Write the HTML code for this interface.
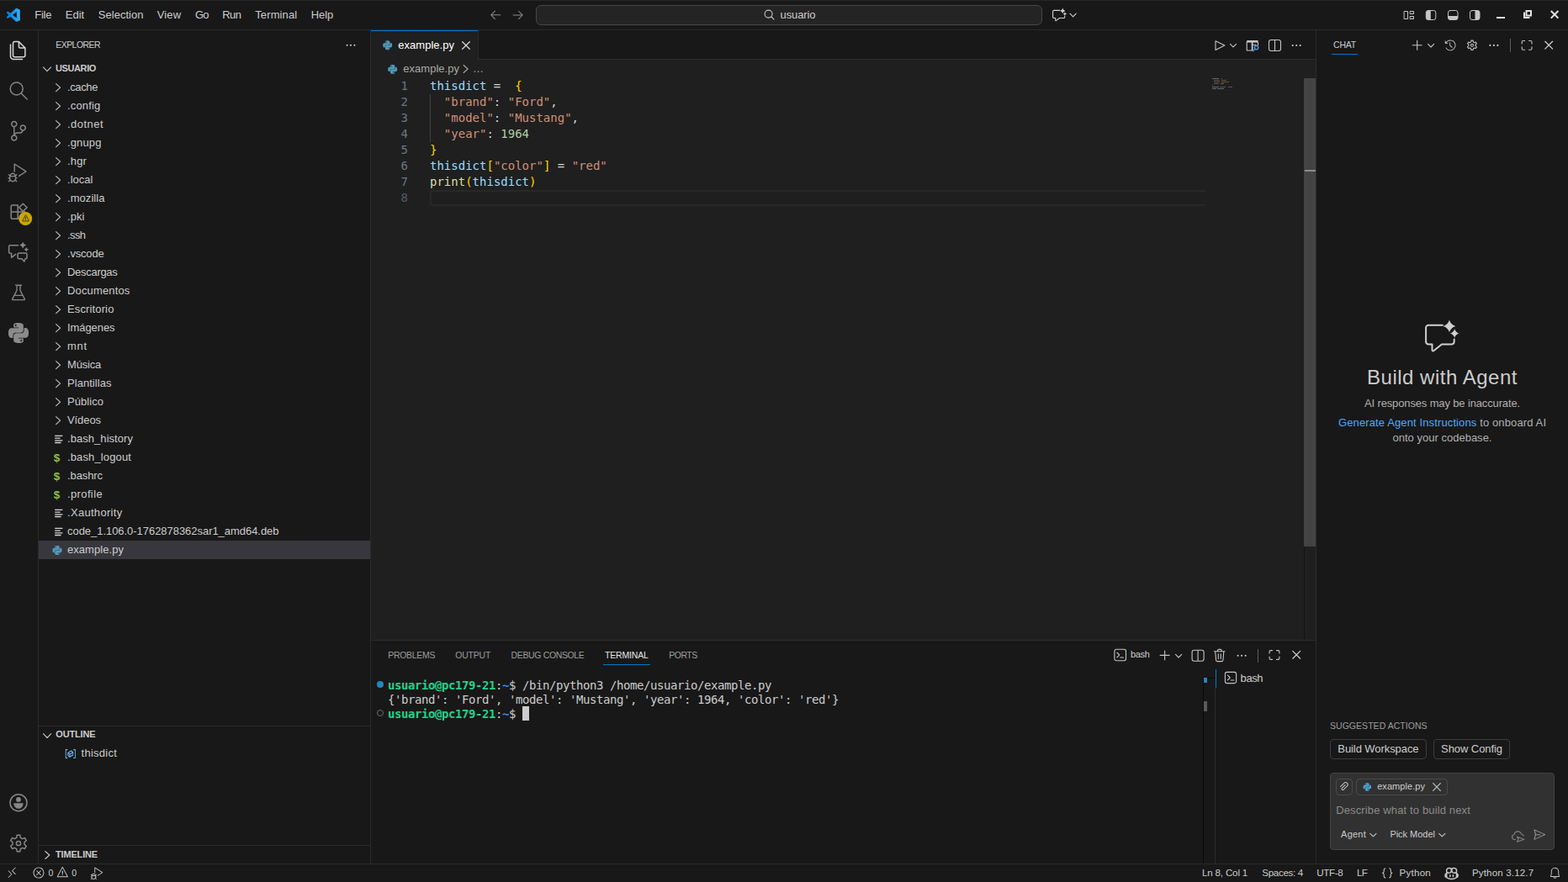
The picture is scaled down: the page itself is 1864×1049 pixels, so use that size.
<!DOCTYPE html>
<html lang="en"><head><meta charset="utf-8"><title>example.py - usuario - Visual Studio Code</title>
<style>
*{box-sizing:border-box;margin:0;padding:0}
html,body{width:1864px;height:1049px;overflow:hidden;background:#181818}
body{position:relative;font-family:"Liberation Sans",sans-serif;font-size:13px;color:#ccc}
body>div,body>svg{position:absolute}
.u{white-space:pre;font-family:"Liberation Sans",sans-serif}
.m{white-space:pre;font-family:"DejaVu Sans Mono","Liberation Mono",monospace}
</style></head>
<body>
<div style="left:0px;top:0px;width:1864px;height:35px;background:#181818;"></div>
<div style="left:0px;top:0px;width:1864px;height:1px;background:#262626;"></div>
<div style="left:0px;top:35px;width:1864px;height:1px;background:#2b2b2b;"></div>
<div style="left:0px;top:36px;width:45px;height:991px;background:#181818;"></div>
<div style="left:45px;top:36px;width:1px;height:991px;background:#2b2b2b;"></div>
<div style="left:46px;top:36px;width:394px;height:991px;background:#181818;"></div>
<div style="left:440px;top:36px;width:1px;height:991px;background:#2b2b2b;"></div>
<div style="left:441px;top:36px;width:1123px;height:35px;background:#181818;"></div>
<div style="left:441px;top:70px;width:1123px;height:1px;background:#2b2b2b;"></div>
<div style="left:441px;top:71px;width:1123px;height:690px;background:#1f1f1f;"></div>
<div style="left:441px;top:761px;width:1123px;height:266px;background:#181818;"></div>
<div style="left:441px;top:761px;width:1123px;height:1px;background:#2b2b2b;"></div>
<div style="left:1564px;top:36px;width:1px;height:991px;background:#2b2b2b;"></div>
<div style="left:1565px;top:36px;width:299px;height:991px;background:#181818;"></div>
<div style="left:0px;top:1027px;width:1864px;height:22px;background:#181818;"></div>
<div style="left:0px;top:1027px;width:1864px;height:1px;background:#2b2b2b;"></div>
<div class="u" style="top:6.5px;height:22px;line-height:22px;font-size:13px;color:#cccccc;left:41.25px;letter-spacing:-0.238px;">File</div>
<div class="u" style="top:6.5px;height:22px;line-height:22px;font-size:13px;color:#cccccc;left:77.75px;letter-spacing:0.023px;">Edit</div>
<div class="u" style="top:6.5px;height:22px;line-height:22px;font-size:13px;color:#cccccc;left:116.75px;letter-spacing:0.030px;">Selection</div>
<div class="u" style="top:6.5px;height:22px;line-height:22px;font-size:13px;color:#cccccc;left:186.75px;letter-spacing:0.137px;">View</div>
<div class="u" style="top:6.5px;height:22px;line-height:22px;font-size:13px;color:#cccccc;left:232px;letter-spacing:-0.922px;">Go</div>
<div class="u" style="top:6.5px;height:22px;line-height:22px;font-size:13px;color:#cccccc;left:264.25px;letter-spacing:-0.536px;">Run</div>
<div class="u" style="top:6.5px;height:22px;line-height:22px;font-size:13px;color:#cccccc;left:303.25px;letter-spacing:0.109px;">Terminal</div>
<div class="u" style="top:6.5px;height:22px;line-height:22px;font-size:13px;color:#cccccc;left:369.75px;letter-spacing:-0.062px;">Help</div>
<div style="left:637px;top:6px;width:602px;height:24px;background:#242424;border:1px solid #464646;border-radius:6px;"></div>
<div class="u" style="top:6.5px;height:22px;line-height:22px;font-size:13px;color:#cccccc;left:927.5px;letter-spacing:-0.092px;">usuario</div>
<div class="u" style="top:44.05px;height:19.5px;line-height:19.5px;font-size:10.5px;color:#cccccc;left:66.25px;letter-spacing:-0.555px;">EXPLORER</div>
<div class="u" style="top:71px;height:20px;line-height:20px;font-size:11px;color:#cccccc;left:66px;font-weight:700;letter-spacing:-0.391px;">USUARIO</div>
<div style="left:46px;top:643px;width:394px;height:22px;background:#37373d;"></div>
<div class="u" style="top:92.5px;height:22px;line-height:22px;font-size:13px;color:#cccccc;left:80px;letter-spacing:-0.385px;">.cache</div>
<div class="u" style="top:114.5px;height:22px;line-height:22px;font-size:13px;color:#cccccc;left:80px;letter-spacing:0.170px;">.config</div>
<div class="u" style="top:136.5px;height:22px;line-height:22px;font-size:13px;color:#cccccc;left:80px;letter-spacing:0.462px;">.dotnet</div>
<div class="u" style="top:158.5px;height:22px;line-height:22px;font-size:13px;color:#cccccc;left:80px;letter-spacing:0.122px;">.gnupg</div>
<div class="u" style="top:180.5px;height:22px;line-height:22px;font-size:13px;color:#cccccc;left:80px;letter-spacing:0.148px;">.hgr</div>
<div class="u" style="top:202.5px;height:22px;line-height:22px;font-size:13px;color:#cccccc;left:80px;letter-spacing:0.023px;">.local</div>
<div class="u" style="top:224.5px;height:22px;line-height:22px;font-size:13px;color:#cccccc;left:80px;letter-spacing:0.053px;">.mozilla</div>
<div class="u" style="top:246.5px;height:22px;line-height:22px;font-size:13px;color:#cccccc;left:80px;letter-spacing:0.066px;">.pki</div>
<div class="u" style="top:268.5px;height:22px;line-height:22px;font-size:13px;color:#cccccc;left:80px;letter-spacing:-0.586px;">.ssh</div>
<div class="u" style="top:290.5px;height:22px;line-height:22px;font-size:13px;color:#cccccc;left:80px;letter-spacing:-0.188px;">.vscode</div>
<div class="u" style="top:312.5px;height:22px;line-height:22px;font-size:13px;color:#cccccc;left:80px;letter-spacing:-0.293px;">Descargas</div>
<div class="u" style="top:334.5px;height:22px;line-height:22px;font-size:13px;color:#cccccc;left:80px;letter-spacing:0.152px;">Documentos</div>
<div class="u" style="top:356.5px;height:22px;line-height:22px;font-size:13px;color:#cccccc;left:80px;letter-spacing:0.131px;">Escritorio</div>
<div class="u" style="top:378.5px;height:22px;line-height:22px;font-size:13px;color:#cccccc;left:80px;letter-spacing:-0.074px;">Imágenes</div>
<div class="u" style="top:400.5px;height:22px;line-height:22px;font-size:13px;color:#cccccc;left:80px;letter-spacing:0.776px;">mnt</div>
<div class="u" style="top:422.5px;height:22px;line-height:22px;font-size:13px;color:#cccccc;left:80px;letter-spacing:-0.198px;">Música</div>
<div class="u" style="top:444.5px;height:22px;line-height:22px;font-size:13px;color:#cccccc;left:80px;letter-spacing:0.047px;">Plantillas</div>
<div class="u" style="top:466.5px;height:22px;line-height:22px;font-size:13px;color:#cccccc;left:80px;letter-spacing:0.051px;">Público</div>
<div class="u" style="top:488.5px;height:22px;line-height:22px;font-size:13px;color:#cccccc;left:80px;letter-spacing:-0.081px;">Vídeos</div>
<div class="u" style="top:510.5px;height:22px;line-height:22px;font-size:13px;color:#cccccc;left:80px;letter-spacing:0.052px;">.bash_history</div>
<div class="u" style="top:533.5px;height:22px;line-height:22px;font-size:13.5px;color:#8dc149;left:63.7px;font-weight:700;">$</div>
<div class="u" style="top:532.5px;height:22px;line-height:22px;font-size:13px;color:#cccccc;left:80px;letter-spacing:0.129px;">.bash_logout</div>
<div class="u" style="top:555.5px;height:22px;line-height:22px;font-size:13.5px;color:#8dc149;left:63.7px;font-weight:700;">$</div>
<div class="u" style="top:554.5px;height:22px;line-height:22px;font-size:13px;color:#cccccc;left:80px;letter-spacing:-0.092px;">.bashrc</div>
<div class="u" style="top:577.5px;height:22px;line-height:22px;font-size:13.5px;color:#8dc149;left:63.7px;font-weight:700;">$</div>
<div class="u" style="top:576.5px;height:22px;line-height:22px;font-size:13px;color:#cccccc;left:80px;letter-spacing:0.371px;">.profile</div>
<div class="u" style="top:598.5px;height:22px;line-height:22px;font-size:13px;color:#cccccc;left:80px;letter-spacing:0.304px;">.Xauthority</div>
<div class="u" style="top:620.5px;height:22px;line-height:22px;font-size:13px;color:#cccccc;left:80px;letter-spacing:-0.041px;">code_1.106.0-1762878362sar1_amd64.deb</div>
<div class="u" style="top:642.5px;height:22px;line-height:22px;font-size:13px;color:#cccccc;left:80px;letter-spacing:0.052px;">example.py</div>
<div style="left:46px;top:863px;width:394px;height:1px;background:#2b2b2b;"></div>
<div class="u" style="top:863.4px;height:20px;line-height:20px;font-size:11px;color:#cccccc;left:66.3px;font-weight:700;letter-spacing:-0.183px;">OUTLINE</div>
<div class="u" style="top:885px;height:22px;line-height:22px;font-size:13px;color:#cccccc;left:96.5px;letter-spacing:0.279px;">thisdict</div>
<div style="left:46px;top:1005px;width:394px;height:1px;background:#2b2b2b;"></div>
<div class="u" style="top:1006px;height:20px;line-height:20px;font-size:11px;color:#cccccc;left:66px;font-weight:700;letter-spacing:-0.168px;">TIMELINE</div>
<div style="left:441px;top:36px;width:127px;height:35px;background:#1f1f1f;"></div>
<div style="left:441px;top:36px;width:127px;height:1px;background:#0078d4;"></div>
<div style="left:568px;top:36px;width:1px;height:35px;background:#2b2b2b;"></div>
<div class="u" style="top:42.5px;height:22px;line-height:22px;font-size:13px;color:#ffffff;left:473.25px;letter-spacing:0.027px;">example.py</div>
<div class="u" style="top:70.5px;height:22px;line-height:22px;font-size:13px;color:#a9a9a9;left:479.25px;letter-spacing:0.027px;">example.py</div>
<div class="u" style="top:70.5px;height:22px;line-height:22px;font-size:13px;color:#a9a9a9;left:562px;letter-spacing:-1.000px;">…</div>
<div style="left:511px;top:226px;width:922px;height:19px;border:2px solid #282828;border-right:0;"></div>
<div style="left:511px;top:112px;width:1px;height:57px;background:#404040;"></div>
<div class="m" style="top:93px;height:19px;line-height:19px;font-size:14px;color:#6e7681;right:1379px;">1</div>
<div class="m" style="top:93px;height:19px;line-height:19px;font-size:14px;color:#d4d4d4;left:511px;"><span style="color:#9cdcfe">thisdict</span><span style="color:#d4d4d4"> =  </span><span style="color:#ffd700">{</span></div>
<div class="m" style="top:112px;height:19px;line-height:19px;font-size:14px;color:#6e7681;right:1379px;">2</div>
<div class="m" style="top:112px;height:19px;line-height:19px;font-size:14px;color:#d4d4d4;left:511px;"><span style="color:#ce9178">  "brand"</span><span style="color:#d4d4d4">: </span><span style="color:#ce9178">"Ford"</span><span style="color:#d4d4d4">,</span></div>
<div class="m" style="top:131px;height:19px;line-height:19px;font-size:14px;color:#6e7681;right:1379px;">3</div>
<div class="m" style="top:131px;height:19px;line-height:19px;font-size:14px;color:#d4d4d4;left:511px;"><span style="color:#ce9178">  "model"</span><span style="color:#d4d4d4">: </span><span style="color:#ce9178">"Mustang"</span><span style="color:#d4d4d4">,</span></div>
<div class="m" style="top:150px;height:19px;line-height:19px;font-size:14px;color:#6e7681;right:1379px;">4</div>
<div class="m" style="top:150px;height:19px;line-height:19px;font-size:14px;color:#d4d4d4;left:511px;"><span style="color:#ce9178">  "year"</span><span style="color:#d4d4d4">: </span><span style="color:#b5cea8">1964</span></div>
<div class="m" style="top:169px;height:19px;line-height:19px;font-size:14px;color:#6e7681;right:1379px;">5</div>
<div class="m" style="top:169px;height:19px;line-height:19px;font-size:14px;color:#d4d4d4;left:511px;"><span style="color:#ffd700">}</span></div>
<div class="m" style="top:188px;height:19px;line-height:19px;font-size:14px;color:#6e7681;right:1379px;">6</div>
<div class="m" style="top:188px;height:19px;line-height:19px;font-size:14px;color:#d4d4d4;left:511px;"><span style="color:#9cdcfe">thisdict</span><span style="color:#ffd700">[</span><span style="color:#ce9178">"color"</span><span style="color:#ffd700">]</span><span style="color:#d4d4d4"> = </span><span style="color:#ce9178">"red"</span></div>
<div class="m" style="top:207px;height:19px;line-height:19px;font-size:14px;color:#6e7681;right:1379px;">7</div>
<div class="m" style="top:207px;height:19px;line-height:19px;font-size:14px;color:#d4d4d4;left:511px;"><span style="color:#dcdcaa">print</span><span style="color:#ffd700">(</span><span style="color:#9cdcfe">thisdict</span><span style="color:#ffd700">)</span></div>
<div class="m" style="top:226px;height:19px;line-height:19px;font-size:14px;color:#555b64;right:1379px;">8</div>
<div style="left:1441px;top:93px;width:8px;height:1px;background:#9cdcfe;opacity:.42;"></div>
<div style="left:1452px;top:93px;width:1px;height:1px;background:#ffd700;opacity:.42;"></div>
<div style="left:1443px;top:95px;width:7px;height:1px;background:#ce9178;opacity:.42;"></div>
<div style="left:1452px;top:95px;width:6px;height:1px;background:#ce9178;opacity:.42;"></div>
<div style="left:1443px;top:97px;width:7px;height:1px;background:#ce9178;opacity:.42;"></div>
<div style="left:1452px;top:97px;width:9px;height:1px;background:#ce9178;opacity:.42;"></div>
<div style="left:1443px;top:99px;width:6px;height:1px;background:#ce9178;opacity:.42;"></div>
<div style="left:1451px;top:99px;width:4px;height:1px;background:#b5cea8;opacity:.42;"></div>
<div style="left:1441px;top:101px;width:1px;height:1px;background:#ffd700;opacity:.42;"></div>
<div style="left:1441px;top:103px;width:8px;height:1px;background:#9cdcfe;opacity:.42;"></div>
<div style="left:1450px;top:103px;width:7px;height:1px;background:#ce9178;opacity:.42;"></div>
<div style="left:1460px;top:103px;width:5px;height:1px;background:#ce9178;opacity:.42;"></div>
<div style="left:1441px;top:105px;width:5px;height:1px;background:#dcdcaa;opacity:.42;"></div>
<div style="left:1447px;top:105px;width:8px;height:1px;background:#9cdcfe;opacity:.42;"></div>
<div style="left:1550px;top:93px;width:14px;height:557px;background:#434343;"></div>
<div style="left:1551px;top:202px;width:13px;height:2px;background:#8c8c8c;"></div>
<div style="left:1550px;top:650px;width:1px;height:111px;background:#141414;"></div>
<div class="u" style="top:770.25px;height:19.5px;line-height:19.5px;font-size:10.5px;color:#9d9d9d;left:461.2px;letter-spacing:-0.295px;">PROBLEMS</div>
<div class="u" style="top:770.25px;height:19.5px;line-height:19.5px;font-size:10.5px;color:#9d9d9d;left:541.3px;letter-spacing:-0.212px;">OUTPUT</div>
<div class="u" style="top:770.25px;height:19.5px;line-height:19.5px;font-size:10.5px;color:#9d9d9d;left:607.6px;letter-spacing:-0.362px;">DEBUG CONSOLE</div>
<div class="u" style="top:770.25px;height:19.5px;line-height:19.5px;font-size:10.5px;color:#e7e7e7;left:718.9px;letter-spacing:-0.149px;">TERMINAL</div>
<div class="u" style="top:770.25px;height:19.5px;line-height:19.5px;font-size:10.5px;color:#9d9d9d;left:795.2px;letter-spacing:-0.477px;">PORTS</div>
<div style="left:717px;top:790px;width:56px;height:1px;background:#0078d4;"></div>
<div class="u" style="top:767.6px;height:20px;line-height:20px;font-size:11px;color:#cccccc;left:1344.1px;letter-spacing:-0.365px;">bash</div>
<div style="left:1495px;top:772px;width:1px;height:16px;background:#5a5a5a;"></div>
<div class="m" style="top:806.5px;height:17px;line-height:17px;font-size:14px;color:#cccccc;left:461px;letter-spacing:-0.43px;"><b style="color:#23d18b">usuario@pc179-21</b>:<b style="color:#3b8eea">~</b>$ /bin/python3 /home/usuario/example.py</div>
<div class="m" style="top:823.5px;height:17px;line-height:17px;font-size:14px;color:#cccccc;left:461px;letter-spacing:-0.43px;">{'brand': 'Ford', 'model': 'Mustang', 'year': 1964, 'color': 'red'}</div>
<div class="m" style="top:840.5px;height:17px;line-height:17px;font-size:14px;color:#cccccc;left:461px;letter-spacing:-0.43px;"><b style="color:#23d18b">usuario@pc179-21</b>:<b style="color:#3b8eea">~</b>$ </div>
<div style="left:621px;top:840px;width:8px;height:17px;background:#cccccc;"></div>
<div style="left:448px;top:810px;width:8px;height:8px;background:#2586bb;border-radius:50%;"></div>
<div style="left:448px;top:844px;width:8px;height:8px;border-radius:50%;border:1.500px solid #6c6c6c;"></div>
<div style="left:1430px;top:806px;width:1px;height:221px;background:#0a0a0a;"></div>
<div style="left:1430px;top:806px;width:14px;height:1px;background:#0a0a0a;"></div>
<div style="left:1431px;top:806px;width:4px;height:6px;background:#2586bb;"></div>
<div style="left:1431px;top:834px;width:4px;height:12px;background:#5a5a5a;"></div>
<div style="left:1444px;top:818px;width:1px;height:209px;background:#2b2b2b;"></div>
<div style="left:1445px;top:796px;width:1px;height:22px;background:#0078d4;"></div>
<div class="u" style="top:795.8px;height:22px;line-height:22px;font-size:13px;color:#cccccc;left:1474.6px;letter-spacing:-0.426px;">bash</div>
<div class="u" style="top:44.25px;height:19.5px;line-height:19.5px;font-size:10.5px;color:#cccccc;left:1585px;letter-spacing:-0.203px;">CHAT</div>
<div style="left:1583px;top:64px;width:31px;height:1px;background:#0078d4;"></div>
<div style="left:1795px;top:46px;width:1px;height:16px;background:#5a5a5a;"></div>
<div class="u" style="top:432.9px;height:32px;line-height:32px;font-size:24px;color:#cccccc;left:1625px;letter-spacing:0.514px;">Build with Agent</div>
<div class="u" style="top:470.7px;height:18px;line-height:18px;font-size:13px;color:#b0b0b0;left:1622px;letter-spacing:-0.140px;">AI responses may be inaccurate.</div>
<div class="u" style="top:494px;height:18px;line-height:18px;font-size:13px;color:#b0b0b0;left:1591px;letter-spacing:0.122px;"><span style="color:#4daafc">Generate Agent Instructions</span> to onboard AI</div>
<div class="u" style="top:511.7px;height:18px;line-height:18px;font-size:13px;color:#b0b0b0;left:1655.5px;letter-spacing:0.010px;">onto your codebase.</div>
<div class="u" style="top:854.25px;height:19.5px;line-height:19.5px;font-size:10.5px;color:#9d9d9d;left:1581px;letter-spacing:0.039px;">SUGGESTED ACTIONS</div>
<div style="left:1581px;top:879px;width:115px;height:24px;border:1px solid #3c3c3c;border-radius:4px;"></div>
<div class="u" style="top:879.5px;height:22px;line-height:22px;font-size:13px;color:#cccccc;left:1590.3px;letter-spacing:-0.074px;">Build Workspace</div>
<div style="left:1704px;top:879px;width:91px;height:24px;border:1px solid #3c3c3c;border-radius:4px;"></div>
<div class="u" style="top:879.5px;height:22px;line-height:22px;font-size:13px;color:#cccccc;left:1713.1px;letter-spacing:-0.074px;">Show Config</div>
<div style="left:1581px;top:919px;width:267px;height:92px;background:#313131;border:1px solid #434343;border-radius:4px;"></div>
<div style="left:1588px;top:926px;width:20px;height:20px;border:1px solid #4a4a4a;border-radius:4px;"></div>
<div style="left:1612px;top:926px;width:109px;height:20px;border:1px solid #4a4a4a;border-radius:4px;"></div>
<div class="u" style="top:924.6px;height:20px;line-height:20px;font-size:11px;color:#cccccc;left:1637.2px;letter-spacing:0.053px;">example.py</div>
<div class="u" style="top:953.3px;height:22px;line-height:22px;font-size:13px;color:#8b8b8b;left:1588.2px;letter-spacing:0.137px;">Describe what to build next</div>
<div class="u" style="top:982.3px;height:20px;line-height:20px;font-size:11px;color:#cccccc;left:1594.1px;letter-spacing:0.230px;">Agent</div>
<div class="u" style="top:982.3px;height:20px;line-height:20px;font-size:11px;color:#cccccc;left:1652.4px;letter-spacing:-0.030px;">Pick Model</div>
<div class="u" style="top:1028.55px;height:19.5px;line-height:19.5px;font-size:10.5px;color:#cccccc;left:57.4px;letter-spacing:-0.244px;">0</div>
<div class="u" style="top:1028.55px;height:19.5px;line-height:19.5px;font-size:10.5px;color:#cccccc;left:85.3px;letter-spacing:-0.244px;">0</div>
<div class="u" style="top:1027.7px;height:20.6px;line-height:20.6px;font-size:11.6px;color:#cccccc;left:1429px;letter-spacing:-0.180px;">Ln 8, Col 1</div>
<div class="u" style="top:1027.7px;height:20.6px;line-height:20.6px;font-size:11.6px;color:#cccccc;left:1500.3px;letter-spacing:-0.329px;">Spaces: 4</div>
<div class="u" style="top:1027.7px;height:20.6px;line-height:20.6px;font-size:11.6px;color:#cccccc;left:1565.3px;letter-spacing:-0.372px;">UTF-8</div>
<div class="u" style="top:1027.7px;height:20.6px;line-height:20.6px;font-size:11.6px;color:#cccccc;left:1613px;letter-spacing:-0.816px;">LF</div>
<div class="u" style="top:1027.7px;height:20.6px;line-height:20.6px;font-size:11.6px;color:#cccccc;left:1663.4px;letter-spacing:0.265px;">Python</div>
<div class="u" style="top:1027.7px;height:20.6px;line-height:20.6px;font-size:11.6px;color:#cccccc;left:1749.9px;letter-spacing:0.141px;">Python 3.12.7</div>
<svg style="left:0;top:0" width="1864" height="1049" viewBox="0 0 1864 1049">
<defs><linearGradient id="vg" x1="0" x2="1" y1="0" y2="0"><stop offset="0" stop-color="#0a7acc"/><stop offset=".55" stop-color="#1b94e6"/><stop offset="1" stop-color="#2cb0fb"/></linearGradient></defs>
<path transform="translate(6.5 8.5) scale(1.2375 1.2375)" d="M10.88 13.92Q10.56 14.08 10.24 13.92Q10.08 13.87 9.92 13.76L4.8 9.07L2.56 10.77Q2.45 10.88 2.24 10.88Q2.03 10.88 1.87 10.72L1.17 10.08Q1.01 9.92 1.01 9.68Q1.01 9.44 1.17 9.28L3.09 7.52L1.17 5.71Q1.01 5.55 1.01 5.31Q1.01 5.07 1.17 4.91L1.87 4.27Q2.03 4.11 2.24 4.11Q2.45 4.11 2.56 4.21L4.8 5.92L10.03 1.17Q10.24 1.01 10.45 0.99Q10.67 0.96 10.88 1.07L13.55 2.4Q13.76 2.45 13.87 2.67Q13.97 2.88 13.97 3.09V8H10.77V4.53L6.88 7.52L10.77 10.45V8H14.03V11.89Q14.03 12.11 13.89 12.32Q13.76 12.53 13.55 12.64Z" fill="url(#vg)"/>
<path transform="translate(581.4 9.5) scale(0.9875 0.9875)" d="M6.99 3.09 2.03 8.11V8.8L6.99 13.81L7.73 13.07L3.57 8.96H14.03V7.95H3.57L7.73 3.79Z" fill="#8a8a8a"/>
<path transform="translate(607.7 9.5) scale(0.9875 0.9875)" d="M9.01 13.87 14.03 8.91V8.16L9.01 3.2L8.27 3.89L12.43 8.05H2.03V9.01H12.43L8.27 13.17Z" fill="#8a8a8a"/>
<circle cx="913.6" cy="16.6" r="4.5" fill="none" stroke="#c5c5c5" stroke-width="1.1"/>
<path d="M917 20L920 23.2" fill="none" stroke="#c5c5c5" stroke-width="1.1" stroke-linecap="round" stroke-linejoin="round" />
<path d="M1259.9 12.4H1252.9A1.3 1.3 0 0 0 1251.6 13.7V20.2A1.3 1.3 0 0 0 1252.9 21.5H1254.7V24.1Q1254.7 25.1 1255.7 24.4L1259.5 21.5H1264.4A1.3 1.3 0 0 0 1265.7 20.2V19.1" fill="none" stroke="#d0d0d0" stroke-width="1.1" stroke-linecap="round" stroke-linejoin="round" />
<path d="M1263.3 9.8Q1263.98 12.22 1266.4 12.9Q1263.98 13.58 1263.3 16Q1262.62 13.58 1260.2 12.9Q1262.62 12.22 1263.3 9.8ZM1265.9 14.3Q1266.38 16.02 1268.1 16.5Q1266.38 16.98 1265.9 18.7Q1265.42 16.98 1263.7 16.5Q1265.42 16.02 1265.9 14.3Z" fill="#d0d0d0" />
<path d="M1272 16.2L1275.6 19.8L1279.2 16.2" fill="none" stroke="#d0d0d0" stroke-width="1.1" stroke-linecap="round" stroke-linejoin="round" />
<path d="M1669.500 13.500h4v9h-4zM1676.500 13.500h4v3h-4zM1676.500 19.500h4v3h-4z" fill="none" stroke="#c5c5c5" stroke-width="1" stroke-linecap="round" stroke-linejoin="round" />
<path d="M1697.8 12.5H1704.3A2.5 2.5 0 0 1 1706.8 15V21A2.5 2.5 0 0 1 1704.3 23.5H1697.8A2.5 2.5 0 0 1 1695.3 21V15A2.5 2.5 0 0 1 1697.8 12.5Z" fill="none" stroke="#c5c5c5" stroke-width="1" stroke-linecap="round" stroke-linejoin="round" />
<path d="M1697.8 12.5H1700.8V23.5H1697.8A2.500 2.500 0 0 1 1695.3 21.0V15.0A2.500 2.500 0 0 1 1697.8 12.5Z" fill="#c5c5c5" />
<path d="M1724 12.5H1730.5A2.5 2.5 0 0 1 1733 15V21A2.5 2.5 0 0 1 1730.5 23.5H1724A2.5 2.5 0 0 1 1721.5 21V15A2.5 2.5 0 0 1 1724 12.5Z" fill="none" stroke="#c5c5c5" stroke-width="1" stroke-linecap="round" stroke-linejoin="round" />
<path d="M1721.5 18.9H1733.0V21.0A2.500 2.500 0 0 1 1730.5 23.5H1724.0A2.500 2.500 0 0 1 1721.5 21.0Z" fill="#c5c5c5" />
<path d="M1750 12.5H1756.5A2.5 2.5 0 0 1 1759 15V21A2.5 2.5 0 0 1 1756.5 23.5H1750A2.5 2.5 0 0 1 1747.5 21V15A2.5 2.5 0 0 1 1750 12.5Z" fill="none" stroke="#c5c5c5" stroke-width="1" stroke-linecap="round" stroke-linejoin="round" />
<path d="M1756.5 12.5H1753.5V23.5H1756.5A2.500 2.500 0 0 0 1759.0 21.0V15.0A2.500 2.500 0 0 0 1756.5 12.5Z" fill="#c5c5c5" />
<path d="M1779 21h10" stroke="#e4e4e4" stroke-width="2" fill="none"/>
<path d="M1814.500 13h5.500v5.500h-5.500z" stroke="#e4e4e4" stroke-width="2" fill="none"/>
<path d="M1812 14.500V21h6.500" stroke="#e4e4e4" stroke-width="2" fill="none"/>
<path d="M1843.800 13l8.600 8.600M1852.400 13l-8.600 8.600" stroke="#e4e4e4" stroke-width="2" fill="none"/>
<path d="M17.500 49.600H22.400L29.900 57V65.700a2 2 0 0 1-2 2H17.500a2 2 0 0 1-2-2V51.600a2 2 0 0 1 2-2ZM22.400 49.600V55.500a1.500 1.500 0 0 0 1.500 1.500H29.900M12.500 53V67a3.500 3.500 0 0 0 3.500 3.500H26.500" fill="none" stroke="#d7d7d7" stroke-width="1.5" stroke-linecap="round" stroke-linejoin="round" />
<circle cx="19.7" cy="105.5" r="7.5" fill="none" stroke="#868686" stroke-width="1.5"/>
<path d="M25.200 111L32.200 118" fill="none" stroke="#868686" stroke-width="1.5" stroke-linecap="round" stroke-linejoin="round" />
<path transform="translate(10 143.8) scale(1.5 1.5)" d="M14.03 5.49Q14.03 4.8 13.65 4.19Q13.28 3.57 12.64 3.25Q12 2.93 11.31 2.99Q10.61 3.04 10.03 3.47Q9.44 3.89 9.2 4.56Q8.96 5.23 9.07 5.92Q9.17 6.61 9.65 7.12Q10.13 7.63 10.83 7.84Q10.56 8.37 10.08 8.67Q9.6 8.96 9.01 8.96H7.04Q5.87 8.96 5.01 9.76V4.91Q5.97 4.75 6.53 3.97Q7.09 3.2 7.01 2.24Q6.93 1.28 6.21 0.64Q5.49 0 4.53 0Q3.57 0 2.85 0.64Q2.13 1.28 2.05 2.24Q1.97 3.2 2.53 3.97Q3.09 4.75 4.05 4.91V10.99Q3.09 11.2 2.51 11.95Q1.92 12.69 2 13.65Q2.08 14.61 2.75 15.28Q3.41 15.95 4.37 16Q5.33 16.05 6.08 15.47Q6.83 14.88 6.99 13.92Q7.15 12.96 6.67 12.16Q6.19 11.36 5.23 11.09Q5.49 10.56 5.97 10.27Q6.45 9.97 7.04 9.97H9.01Q9.97 9.97 10.75 9.41Q11.52 8.85 11.84 7.95Q12.75 7.84 13.39 7.12Q14.03 6.4 14.03 5.49ZM3.04 2.51Q3.04 1.87 3.47 1.44Q3.89 1.01 4.53 1.01Q5.17 1.01 5.6 1.44Q6.03 1.87 6.03 2.48Q6.03 3.09 5.6 3.55Q5.17 4 4.53 4Q3.89 4 3.47 3.55Q3.04 3.09 3.04 2.51ZM6.03 13.44Q6.03 14.08 5.6 14.51Q5.17 14.93 4.53 14.93Q3.89 14.93 3.47 14.51Q3.04 14.08 3.04 13.47Q3.04 12.85 3.47 12.4Q3.89 11.95 4.53 11.95Q5.17 11.95 5.6 12.4Q6.03 12.85 6.03 13.44ZM11.52 6.99Q10.88 6.99 10.45 6.53Q10.03 6.08 10.03 5.47Q10.03 4.85 10.45 4.43Q10.88 4 11.49 4Q12.11 4 12.56 4.43Q13.01 4.85 13.01 5.47Q13.01 6.08 12.56 6.53Q12.11 6.99 11.52 6.99Z" fill="#868686"/>
<path transform="translate(9.6 194.5) scale(1.375 1.375)" d="M7.31 9.01 6.4 9.87Q6.19 9.07 5.52 8.53Q4.85 8 4 8Q3.15 8 2.48 8.53Q1.81 9.07 1.6 9.87L0.69 9.01L0 9.71L1.17 10.83L1.01 10.99V12H0V13.01H1.01V13.07Q1.07 13.55 1.28 14.03L0 15.31L0.69 16L1.81 14.88Q2.19 15.41 2.77 15.71Q3.36 16 4 16Q4.64 16 5.23 15.71Q5.81 15.41 6.19 14.88L7.31 16L8 15.31L6.72 13.97Q6.93 13.55 6.99 13.01V12.96H8V12H6.99V10.99L6.88 10.83L8 9.71ZM4 9.01Q4.64 9.01 5.07 9.44Q5.49 9.87 5.49 10.51H2.51Q2.51 9.87 2.93 9.44Q3.36 9.01 4 9.01ZM6.03 13.01Q5.92 13.81 5.36 14.37Q4.8 14.93 4 14.99Q3.2 14.93 2.64 14.37Q2.08 13.81 2.03 13.01V11.52H6.03ZM15.84 6.4V7.25L9.01 11.57V10.4L14.67 6.83L6.03 1.33V7.63Q5.55 7.31 5.01 7.15V0.43L5.76 0Z" fill="#868686"/>
<path d="M13.200 245.400a1.500 1.500 0 0 1 1.500-1.500H21.200V260.200H14.700a1.500 1.500 0 0 1-1.500-1.500ZM13.200 252H29.700M21.200 260.200H28.200a1.500 1.500 0 0 0 1.500-1.500V252M27.400 242.200L32 246.800L27.400 251.400L22.800 246.800Z" fill="none" stroke="#868686" stroke-width="1.5" stroke-linecap="round" stroke-linejoin="round" />
<circle cx="30.2" cy="260" r="8" fill="#cca700"/>
<path d="M30.400 255.900L26.600 262.900H34.200Z" fill="none" stroke="#4a3c00" stroke-width="1" stroke-linecap="round" stroke-linejoin="round" />
<path d="M30.400 258.400v2.300M30.400 261.700v.200" fill="none" stroke="#4a3c00" stroke-width="1" stroke-linecap="round" stroke-linejoin="round" />
<path d="M21.500 291.800H12.200a1.600 1.600 0 0 0-1.600 1.600V299.700a1.600 1.600 0 0 0 1.600 1.600H13.600V306.300L18.600 302.300" fill="none" stroke="#868686" stroke-width="1.5" stroke-linecap="round" stroke-linejoin="round" />
<path d="M22.600 301H30.500a1.500 1.500 0 0 1 1.500 1.500V306.300a1.500 1.500 0 0 1-1.500 1.500H30L28.800 311L26 307.800H22.600a1.500 1.500 0 0 1-1.500-1.500V302.500a1.500 1.500 0 0 1 1.500-1.500Z" fill="none" stroke="#868686" stroke-width="1.5" stroke-linecap="round" stroke-linejoin="round" />
<path d="M27.2 287.7Q28.06 290.74 31.1 291.6Q28.06 292.46 27.2 295.5Q26.34 292.46 23.3 291.6Q26.34 290.74 27.2 287.7ZM31.3 294.1Q31.89 296.21 34 296.8Q31.89 297.39 31.3 299.5Q30.71 297.39 28.6 296.8Q30.71 296.21 31.3 294.1Z" fill="#868686" />
<path transform="translate(11.25 337.15) scale(1.34375 1.34375)" d="M13.87 13.55 10.03 6.03V2.03H10.99V1.01H5.01V1.97H6.03V5.97L2.08 13.55Q1.87 14.08 2.16 14.53Q2.45 14.99 2.99 14.99H13.01Q13.55 14.99 13.84 14.53Q14.13 14.08 13.87 13.55ZM6.88 6.4 6.99 6.19V2.03H9.01V6.24L10.93 10.03H5.07ZM2.99 14.03 4.53 10.99H11.47L13.01 14.03Z" fill="#868686"/>
<path transform="translate(10 384) scale(1 1)" d="M14.25.18l.9.2.73.26.59.3.45.32.34.34.25.34.16.33.1.3.04.26.02.2-.01.13V8.5l-.05.63-.13.55-.21.46-.26.38-.3.31-.33.25-.35.19-.35.14-.33.1-.3.07-.26.04-.21.02H8.77l-.69.05-.59.14-.5.22-.41.27-.33.32-.27.35-.2.36-.15.37-.1.35-.07.32-.04.27-.02.21v3.06H3.17l-.21-.03-.28-.07-.32-.12-.35-.18-.36-.26-.36-.36-.35-.46-.32-.59-.28-.73-.21-.88-.14-1.05-.05-1.23.06-1.22.16-1.04.24-.87.32-.71.36-.57.4-.44.42-.33.42-.24.4-.16.36-.1.32-.05.24-.01h.16l.06.01h8.16v-.83H6.18l-.01-2.75-.02-.37.05-.34.11-.31.17-.28.25-.26.31-.23.38-.2.44-.18.51-.15.58-.12.64-.1.71-.06.77-.04.84-.02 1.27.05zm-6.3 1.98l-.23.33-.08.41.08.41.23.34.33.22.41.09.41-.09.33-.22.23-.34.08-.41-.08-.41-.23-.33-.33-.22-.41-.09-.41.09zm13.09 3.95l.28.06.32.12.35.18.36.27.36.35.35.47.32.59.28.73.21.88.14 1.04.05 1.23-.06 1.23-.16 1.04-.24.86-.32.71-.36.57-.4.45-.42.33-.42.24-.4.16-.36.09-.32.05-.24.02-.16-.01h-8.22v.82h5.84l.01 2.76.02.36-.05.34-.11.31-.17.29-.25.25-.31.24-.38.2-.44.17-.51.15-.58.13-.64.09-.71.07-.77.04-.84.01-1.27-.04-1.07-.14-.9-.2-.73-.25-.59-.3-.45-.33-.34-.34-.25-.34-.16-.33-.1-.3-.04-.25-.02-.2.01-.13v-5.34l.05-.64.13-.54.21-.46.26-.38.3-.32.33-.24.35-.2.35-.14.33-.1.3-.06.26-.04.21-.02.13-.01h5.84l.69-.05.59-.14.5-.21.41-.28.33-.32.27-.35.2-.36.15-.36.1-.35.07-.32.04-.28.02-.21V6.07h2.09l.14.01zm-6.47 14.25l-.23.33-.08.41.08.41.23.33.33.23.41.08.41-.08.33-.23.23-.33.08-.41-.08-.41-.23-.33-.33-.23-.41-.08-.41.08z" fill="#8b8b8b"/>
<circle cx="22" cy="954.7" r="10" fill="none" stroke="#868686" stroke-width="1.5"/>
<circle cx="22" cy="950.9" r="2.9" fill="#868686"/>
<path d="M16.300 955.300H27.700A5.700 6.500 0 0 1 16.300 955.300Z" fill="#868686" />
<path d="M24.31 996.29L23.89 993.28L20.11 993.28L19.69 996.29L17.34 997.64L14.53 996.51L12.64 999.78L15.03 1001.65L15.03 1004.35L12.64 1006.22L14.53 1009.49L17.34 1008.36L19.69 1009.71L20.11 1012.72L23.89 1012.72L24.31 1009.71L26.66 1008.36L29.47 1009.49L31.36 1006.22L28.97 1004.35L28.97 1001.65L31.36 999.78L29.47 996.51L26.66 997.64Z" fill="none" stroke="#868686" stroke-width="1.5" stroke-linecap="round" stroke-linejoin="round" />
<circle cx="22" cy="1003" r="2.6" fill="none" stroke="#868686" stroke-width="1.5"/>
<circle cx="412.6" cy="53.8" r="1.05" fill="#d0d0d0"/>
<circle cx="417" cy="53.8" r="1.05" fill="#d0d0d0"/>
<circle cx="421.4" cy="53.8" r="1.05" fill="#d0d0d0"/>
<path d="M51.4 79.9L56 84.7L60.6 79.9" fill="none" stroke="#c5c5c5" stroke-width="1.1" stroke-linecap="round" stroke-linejoin="round" />
<path d="M66.6 99.7L71.6 104.2L66.6 108.7" fill="none" stroke="#c5c5c5" stroke-width="1.1" stroke-linecap="round" stroke-linejoin="round" />
<path d="M66.6 121.7L71.6 126.2L66.6 130.7" fill="none" stroke="#c5c5c5" stroke-width="1.1" stroke-linecap="round" stroke-linejoin="round" />
<path d="M66.6 143.7L71.6 148.2L66.6 152.7" fill="none" stroke="#c5c5c5" stroke-width="1.1" stroke-linecap="round" stroke-linejoin="round" />
<path d="M66.6 165.7L71.6 170.2L66.6 174.7" fill="none" stroke="#c5c5c5" stroke-width="1.1" stroke-linecap="round" stroke-linejoin="round" />
<path d="M66.6 187.7L71.6 192.2L66.6 196.7" fill="none" stroke="#c5c5c5" stroke-width="1.1" stroke-linecap="round" stroke-linejoin="round" />
<path d="M66.6 209.7L71.6 214.2L66.6 218.7" fill="none" stroke="#c5c5c5" stroke-width="1.1" stroke-linecap="round" stroke-linejoin="round" />
<path d="M66.6 231.7L71.6 236.2L66.6 240.7" fill="none" stroke="#c5c5c5" stroke-width="1.1" stroke-linecap="round" stroke-linejoin="round" />
<path d="M66.6 253.7L71.6 258.2L66.6 262.7" fill="none" stroke="#c5c5c5" stroke-width="1.1" stroke-linecap="round" stroke-linejoin="round" />
<path d="M66.6 275.7L71.6 280.2L66.6 284.7" fill="none" stroke="#c5c5c5" stroke-width="1.1" stroke-linecap="round" stroke-linejoin="round" />
<path d="M66.6 297.7L71.6 302.2L66.6 306.7" fill="none" stroke="#c5c5c5" stroke-width="1.1" stroke-linecap="round" stroke-linejoin="round" />
<path d="M66.6 319.7L71.6 324.2L66.6 328.7" fill="none" stroke="#c5c5c5" stroke-width="1.1" stroke-linecap="round" stroke-linejoin="round" />
<path d="M66.6 341.7L71.6 346.2L66.6 350.7" fill="none" stroke="#c5c5c5" stroke-width="1.1" stroke-linecap="round" stroke-linejoin="round" />
<path d="M66.6 363.7L71.6 368.2L66.6 372.7" fill="none" stroke="#c5c5c5" stroke-width="1.1" stroke-linecap="round" stroke-linejoin="round" />
<path d="M66.6 385.7L71.6 390.2L66.6 394.7" fill="none" stroke="#c5c5c5" stroke-width="1.1" stroke-linecap="round" stroke-linejoin="round" />
<path d="M66.6 407.7L71.6 412.2L66.6 416.7" fill="none" stroke="#c5c5c5" stroke-width="1.1" stroke-linecap="round" stroke-linejoin="round" />
<path d="M66.6 429.7L71.6 434.2L66.6 438.7" fill="none" stroke="#c5c5c5" stroke-width="1.1" stroke-linecap="round" stroke-linejoin="round" />
<path d="M66.6 451.7L71.6 456.2L66.6 460.7" fill="none" stroke="#c5c5c5" stroke-width="1.1" stroke-linecap="round" stroke-linejoin="round" />
<path d="M66.6 473.7L71.6 478.2L66.6 482.7" fill="none" stroke="#c5c5c5" stroke-width="1.1" stroke-linecap="round" stroke-linejoin="round" />
<path d="M66.6 495.7L71.6 500.2L66.6 504.7" fill="none" stroke="#c5c5c5" stroke-width="1.1" stroke-linecap="round" stroke-linejoin="round" />
<path d="M65.200 518.4h9.200M65.200 521.1h6.500M65.200 523.8h9.200M65.200 526.5h7.300" fill="none" stroke="#d4d7d6" stroke-width="1.3" stroke-linecap="round" stroke-linejoin="round" style="stroke-linecap:butt"/>
<path d="M65.200 606.4h9.200M65.200 609.1h6.500M65.200 611.8h9.200M65.200 614.5h7.300" fill="none" stroke="#d4d7d6" stroke-width="1.3" stroke-linecap="round" stroke-linejoin="round" style="stroke-linecap:butt"/>
<path d="M65.200 628.4h9.200M65.200 631.1h6.500M65.200 633.8h9.200M65.200 636.5h7.300" fill="none" stroke="#d4d7d6" stroke-width="1.3" stroke-linecap="round" stroke-linejoin="round" style="stroke-linecap:butt"/>
<path transform="translate(62.45 648.95) scale(0.4625 0.4625)" d="M14.25.18l.9.2.73.26.59.3.45.32.34.34.25.34.16.33.1.3.04.26.02.2-.01.13V8.5l-.05.63-.13.55-.21.46-.26.38-.3.31-.33.25-.35.19-.35.14-.33.1-.3.07-.26.04-.21.02H8.77l-.69.05-.59.14-.5.22-.41.27-.33.32-.27.35-.2.36-.15.37-.1.35-.07.32-.04.27-.02.21v3.06H3.17l-.21-.03-.28-.07-.32-.12-.35-.18-.36-.26-.36-.36-.35-.46-.32-.59-.28-.73-.21-.88-.14-1.05-.05-1.23.06-1.22.16-1.04.24-.87.32-.71.36-.57.4-.44.42-.33.42-.24.4-.16.36-.1.32-.05.24-.01h.16l.06.01h8.16v-.83H6.18l-.01-2.75-.02-.37.05-.34.11-.31.17-.28.25-.26.31-.23.38-.2.44-.18.51-.15.58-.12.64-.1.71-.06.77-.04.84-.02 1.27.05zm-6.3 1.98l-.23.33-.08.41.08.41.23.34.33.22.41.09.41-.09.33-.22.23-.34.08-.41-.08-.41-.23-.33-.33-.22-.41-.09-.41.09zm13.09 3.95l.28.06.32.12.35.18.36.27.36.35.35.47.32.59.28.73.21.88.14 1.04.05 1.23-.06 1.23-.16 1.04-.24.86-.32.71-.36.57-.4.45-.42.33-.42.24-.4.16-.36.09-.32.05-.24.02-.16-.01h-8.22v.82h5.84l.01 2.76.02.36-.05.34-.11.31-.17.29-.25.25-.31.24-.38.2-.44.17-.51.15-.58.13-.64.09-.71.07-.77.04-.84.01-1.27-.04-1.07-.14-.9-.2-.73-.25-.59-.3-.45-.33-.34-.34-.25-.34-.16-.33-.1-.3-.04-.25-.02-.2.01-.13v-5.34l.05-.64.13-.54.21-.46.26-.38.3-.32.33-.24.35-.2.35-.14.33-.1.3-.06.26-.04.21-.02.13-.01h5.84l.69-.05.59-.14.5-.21.41-.28.33-.32.27-.35.2-.36.15-.36.1-.35.07-.32.04-.28.02-.21V6.07h2.09l.14.01zm-6.47 14.25l-.23.33-.08.41.08.41.23.33.33.23.41.08.41-.08.33-.23.23-.33.08-.41-.08-.41-.23-.33-.33-.23-.41-.08-.41.08z" fill="#519aba"/>
<path d="M51.5 872.7L56.1 877.5L60.7 872.7" fill="none" stroke="#c5c5c5" stroke-width="1.1" stroke-linecap="round" stroke-linejoin="round" />
<path transform="translate(76.92 886.24) scale(0.86 1.22)" d="M2.03 5.01H4V4H1.49L1.01 4.48V12.48L1.49 13.01H4V12H2.03ZM14.51 4H12V5.01H14.03V12H12V13.01H14.51L14.99 12.48V4.48ZM11.79 6.56 12 6.99V9.49L11.68 9.97L7.2 11.95H6.72L4.27 10.45L4 10.03V7.52L4.32 7.09L8.8 5.07H9.28ZM5.01 9.71 6.51 10.61V9.28L5.01 8.37ZM5.6 7.57 7.04 8.43 10.4 6.93 8.96 6.08ZM7.52 10.72 11.04 9.17V7.79L7.52 9.33Z" fill="#75beff"/>
<path d="M53.8 1012.5L58.8 1017L53.8 1021.5" fill="none" stroke="#c5c5c5" stroke-width="1.1" stroke-linecap="round" stroke-linejoin="round" />
<path transform="translate(455.25 48.35) scale(0.454167 0.454167)" d="M14.25.18l.9.2.73.26.59.3.45.32.34.34.25.34.16.33.1.3.04.26.02.2-.01.13V8.5l-.05.63-.13.55-.21.46-.26.38-.3.31-.33.25-.35.19-.35.14-.33.1-.3.07-.26.04-.21.02H8.77l-.69.05-.59.14-.5.22-.41.27-.33.32-.27.35-.2.36-.15.37-.1.35-.07.32-.04.27-.02.21v3.06H3.17l-.21-.03-.28-.07-.32-.12-.35-.18-.36-.26-.36-.36-.35-.46-.32-.59-.28-.73-.21-.88-.14-1.05-.05-1.23.06-1.22.16-1.04.24-.87.32-.71.36-.57.4-.44.42-.33.42-.24.4-.16.36-.1.32-.05.24-.01h.16l.06.01h8.16v-.83H6.18l-.01-2.75-.02-.37.05-.34.11-.31.17-.28.25-.26.31-.23.38-.2.44-.18.51-.15.58-.12.64-.1.71-.06.77-.04.84-.02 1.27.05zm-6.3 1.98l-.23.33-.08.41.08.41.23.34.33.22.41.09.41-.09.33-.22.23-.34.08-.41-.08-.41-.23-.33-.33-.22-.41-.09-.41.09zm13.09 3.95l.28.06.32.12.35.18.36.27.36.35.35.47.32.59.28.73.21.88.14 1.04.05 1.23-.06 1.23-.16 1.04-.24.86-.32.71-.36.57-.4.45-.42.33-.42.24-.4.16-.36.09-.32.05-.24.02-.16-.01h-8.22v.82h5.84l.01 2.76.02.36-.05.34-.11.31-.17.29-.25.25-.31.24-.38.2-.44.17-.51.15-.58.13-.64.09-.71.07-.77.04-.84.01-1.27-.04-1.07-.14-.9-.2-.73-.25-.59-.3-.45-.33-.34-.34-.25-.34-.16-.33-.1-.3-.04-.25-.02-.2.01-.13v-5.34l.05-.64.13-.54.21-.46.26-.38.3-.32.33-.24.35-.2.35-.14.33-.1.3-.06.26-.04.21-.02.13-.01h5.84l.69-.05.59-.14.5-.21.41-.28.33-.32.27-.35.2-.36.15-.36.1-.35.07-.32.04-.28.02-.21V6.07h2.09l.14.01zm-6.47 14.25l-.23.33-.08.41.08.41.23.33.33.23.41.08.41-.08.33-.23.23-.33.08-.41-.08-.41-.23-.33-.33-.23-.41-.08-.41.08z" fill="#519aba"/>
<path d="M549.7 49.7l8.6 8.6M558.3 49.7l-8.6 8.6" fill="none" stroke="#d8d8d8" stroke-width="1.3" stroke-linecap="round" stroke-linejoin="round" />
<path d="M1445 48.800L1455.800 54.100L1445 59.400Z" fill="none" stroke="#c5c5c5" stroke-width="1.1" stroke-linecap="round" stroke-linejoin="round" />
<path d="M1462.4 52.3L1466 55.9L1469.6 52.3" fill="none" stroke="#c5c5c5" stroke-width="1.1" stroke-linecap="round" stroke-linejoin="round" />
<path d="M1482.200 49.300h13.300" stroke="#c5c5c5" stroke-width="2.600" fill="none"/><path d="M1482.200 49.500V60h6.400V50M1495.500 50V54" stroke="#c5c5c5" stroke-width="1.100" fill="none"/><path d="M1488.600 50V60" stroke="#c5c5c5" stroke-width="1.800" fill="none"/><path d="M1488.600 53.300h5" stroke="#c5c5c5" stroke-width="1" fill="none"/>
<circle cx="1493.6" cy="56.6" r="2.2" fill="none" stroke="#59a4f9" stroke-width="1.2"/>
<path d="M1492 58.300L1489.500 60.800" fill="none" stroke="#59a4f9" stroke-width="1.2" stroke-linecap="round" stroke-linejoin="round" />
<path d="M1511 47.5H1520A2.5 2.5 0 0 1 1522.5 50V58A2.5 2.5 0 0 1 1520 60.5H1511A2.5 2.5 0 0 1 1508.5 58V50A2.5 2.5 0 0 1 1511 47.5ZM1515.5 47.5V60.5" fill="none" stroke="#c5c5c5" stroke-width="1.1" stroke-linecap="round" stroke-linejoin="round" />
<circle cx="1536.7" cy="54" r="1.05" fill="#d0d0d0"/>
<circle cx="1541.2" cy="54" r="1.05" fill="#d0d0d0"/>
<circle cx="1545.7" cy="54" r="1.05" fill="#d0d0d0"/>
<path transform="translate(461.25 76.95) scale(0.454167 0.454167)" d="M14.25.18l.9.2.73.26.59.3.45.32.34.34.25.34.16.33.1.3.04.26.02.2-.01.13V8.5l-.05.63-.13.55-.21.46-.26.38-.3.31-.33.25-.35.19-.35.14-.33.1-.3.07-.26.04-.21.02H8.77l-.69.05-.59.14-.5.22-.41.27-.33.32-.27.35-.2.36-.15.37-.1.35-.07.32-.04.27-.02.21v3.06H3.17l-.21-.03-.28-.07-.32-.12-.35-.18-.36-.26-.36-.36-.35-.46-.32-.59-.28-.73-.21-.88-.14-1.05-.05-1.23.06-1.22.16-1.04.24-.87.32-.71.36-.57.4-.44.42-.33.42-.24.4-.16.36-.1.32-.05.24-.01h.16l.06.01h8.16v-.83H6.18l-.01-2.75-.02-.37.05-.34.11-.31.17-.28.25-.26.31-.23.38-.2.44-.18.51-.15.58-.12.64-.1.71-.06.77-.04.84-.02 1.27.05zm-6.3 1.98l-.23.33-.08.41.08.41.23.34.33.22.41.09.41-.09.33-.22.23-.34.08-.41-.08-.41-.23-.33-.33-.22-.41-.09-.41.09zm13.09 3.95l.28.06.32.12.35.18.36.27.36.35.35.47.32.59.28.73.21.88.14 1.04.05 1.23-.06 1.23-.16 1.04-.24.86-.32.71-.36.57-.4.45-.42.33-.42.24-.4.16-.36.09-.32.05-.24.02-.16-.01h-8.22v.82h5.84l.01 2.76.02.36-.05.34-.11.31-.17.29-.25.25-.31.24-.38.2-.44.17-.51.15-.58.13-.64.09-.71.07-.77.04-.84.01-1.27-.04-1.07-.14-.9-.2-.73-.25-.59-.3-.45-.33-.34-.34-.25-.34-.16-.33-.1-.3-.04-.25-.02-.2.01-.13v-5.34l.05-.64.13-.54.21-.46.26-.38.3-.32.33-.24.35-.2.35-.14.33-.1.3-.06.26-.04.21-.02.13-.01h5.84l.69-.05.59-.14.5-.21.41-.28.33-.32.27-.35.2-.36.15-.36.1-.35.07-.32.04-.28.02-.21V6.07h2.09l.14.01zm-6.47 14.25l-.23.33-.08.41.08.41.23.33.33.23.41.08.41-.08.33-.23.23-.33.08-.41-.08-.41-.23-.33-.33-.23-.41-.08-.41.08z" fill="#519aba"/>
<path d="M551.1 77.5L556.1 82L551.1 86.5" fill="none" stroke="#a9a9a9" stroke-width="1.1" stroke-linecap="round" stroke-linejoin="round" />
<path d="M1327.1 772.3H1336.3A2.2 2.2 0 0 1 1338.5 774.5V783.5A2.2 2.2 0 0 1 1336.3 785.7H1327.1A2.2 2.2 0 0 1 1324.9 783.5V774.5A2.2 2.2 0 0 1 1327.1 772.3ZM1327.9 776.2L1330.7 779L1327.9 781.8M1331.7 782H1335.5" fill="none" stroke="#c5c5c5" stroke-width="1.1" stroke-linecap="round" stroke-linejoin="round" />
<path d="M1384.6 773.95v10.9M1379.15 779.4h10.9" fill="none" stroke="#c5c5c5" stroke-width="1.1" stroke-linecap="round" stroke-linejoin="round" />
<path d="M1397.5 778.4L1401.1 782L1404.7 778.4" fill="none" stroke="#c5c5c5" stroke-width="1.1" stroke-linecap="round" stroke-linejoin="round" />
<path d="M1419.6 773.3H1428.6A2.5 2.5 0 0 1 1431.1 775.8V783.8A2.5 2.5 0 0 1 1428.6 786.3H1419.6A2.5 2.5 0 0 1 1417.1 783.8V775.8A2.5 2.5 0 0 1 1419.6 773.3ZM1424.1 773.3V786.3" fill="none" stroke="#c5c5c5" stroke-width="1.1" stroke-linecap="round" stroke-linejoin="round" />
<path d="M1443.500 774.800H1456M1447.400 774.600v-.900a1.300 1.300 0 0 1 1.300-1.300h2.100a1.300 1.300 0 0 1 1.300 1.300v.900M1444.700 775l.900 10.200a1.600 1.600 0 0 0 1.600 1.400h5.100a1.600 1.600 0 0 0 1.600-1.400l.900-10.200M1448.300 777.800v5.900M1451.200 777.800v5.900" fill="none" stroke="#c5c5c5" stroke-width="1.1" stroke-linecap="round" stroke-linejoin="round" />
<circle cx="1471.6" cy="779.7" r="1.05" fill="#d0d0d0"/>
<circle cx="1476.1" cy="779.7" r="1.05" fill="#d0d0d0"/>
<circle cx="1480.6" cy="779.7" r="1.05" fill="#d0d0d0"/>
<path d="M1509.1 777V775.1A1.5 1.5 0 0 1 1510.6 773.6H1512.5M1517.5 773.6H1519.4A1.5 1.5 0 0 1 1520.9 775.1V777M1520.9 781V782.9A1.5 1.5 0 0 1 1519.4 784.4H1517.5M1512.5 784.4H1510.6A1.5 1.5 0 0 1 1509.1 782.9V781" fill="none" stroke="#c5c5c5" stroke-width="1.1" stroke-linecap="round" stroke-linejoin="round" />
<path d="M1536.8 774.4l8.8 8.8M1545.6 774.4l-8.8 8.8" fill="none" stroke="#d0d0d0" stroke-width="1.25" stroke-linecap="round" stroke-linejoin="round" />
<path d="M1458.6 799.4H1467.4A2.2 2.2 0 0 1 1469.6 801.6V810.4A2.2 2.2 0 0 1 1467.4 812.6H1458.6A2.2 2.2 0 0 1 1456.4 810.4V801.6A2.2 2.2 0 0 1 1458.6 799.4ZM1459.4 803.2L1462.2 806L1459.4 808.8M1463.2 809H1467" fill="none" stroke="#c5c5c5" stroke-width="1.1" stroke-linecap="round" stroke-linejoin="round" />
<path d="M1684.7 48.25v10.9M1679.25 53.7h10.9" fill="none" stroke="#c5c5c5" stroke-width="1.1" stroke-linecap="round" stroke-linejoin="round" />
<path d="M1697.5 52.4L1701.1 56L1704.7 52.4" fill="none" stroke="#c5c5c5" stroke-width="1.1" stroke-linecap="round" stroke-linejoin="round" />
<path transform="translate(1716.8 46.6) scale(0.9125 0.9125)" d="M13.49 12.32Q14.45 11.09 14.8 9.57Q15.15 8.05 14.83 6.53Q14.51 5.01 13.55 3.79Q12.53 2.4 10.93 1.65Q9.33 0.91 7.6 1.01Q5.87 1.12 4.37 2Q2.88 2.88 2.03 4.37V1.97H1.01V5.49L1.49 5.97H5.01V5.01H2.83Q3.84 3.2 5.76 2.43Q7.68 1.65 9.65 2.21Q11.63 2.77 12.85 4.43Q14.08 6.08 14.03 8.13Q13.97 10.19 12.67 11.79Q11.36 13.39 9.36 13.87Q7.36 14.35 5.49 13.47Q3.63 12.59 2.67 10.77L1.81 11.25Q2.61 12.8 4.11 13.81Q5.6 14.83 7.36 14.99Q9.12 15.15 10.77 14.43Q12.43 13.71 13.49 12.32ZM10.13 11.36 10.88 10.67 8 7.79V4H6.99V8L7.15 8.37Z" fill="#c5c5c5"/>
<path d="M1751.35 49.88L1751.1 48.16L1748.9 48.16L1748.65 49.88L1747.28 50.67L1745.66 50.03L1744.56 51.93L1745.93 53.01L1745.93 54.59L1744.56 55.67L1745.66 57.57L1747.28 56.93L1748.65 57.72L1748.9 59.44L1751.1 59.44L1751.35 57.72L1752.72 56.93L1754.34 57.57L1755.44 55.67L1754.07 54.59L1754.07 53.01L1755.44 51.93L1754.34 50.03L1752.72 50.67Z" fill="none" stroke="#c5c5c5" stroke-width="1.1" stroke-linecap="round" stroke-linejoin="round" />
<circle cx="1750" cy="53.8" r="1.5" fill="none" stroke="#c5c5c5" stroke-width="1.1"/>
<circle cx="1771.4" cy="53.9" r="1.05" fill="#d0d0d0"/>
<circle cx="1775.9" cy="53.9" r="1.05" fill="#d0d0d0"/>
<circle cx="1780.4" cy="53.9" r="1.05" fill="#d0d0d0"/>
<path d="M1809.2 51.9V50A1.5 1.5 0 0 1 1810.7 48.5H1812.6M1817.6 48.5H1819.5A1.5 1.5 0 0 1 1821 50V51.9M1821 55.9V57.8A1.5 1.5 0 0 1 1819.5 59.3H1817.6M1812.6 59.3H1810.7A1.5 1.5 0 0 1 1809.2 57.8V55.9" fill="none" stroke="#c5c5c5" stroke-width="1.1" stroke-linecap="round" stroke-linejoin="round" />
<path d="M1836.8 49.3l8.8 8.8M1845.6 49.3l-8.8 8.8" fill="none" stroke="#d0d0d0" stroke-width="1.25" stroke-linecap="round" stroke-linejoin="round" />
<path d="M1714.88 386.7H1698.2A3.1 3.1 0 0 0 1695.1 389.95V406.22A3.1 3.1 0 0 0 1698.2 409.47H1702.49V415.98Q1702.49 418.48 1704.87 416.73L1713.93 409.47H1725.6A3.1 3.1 0 0 0 1728.7 406.22V403.46" fill="none" stroke="#cfcfcf" stroke-width="2" stroke-linecap="round" stroke-linejoin="round" />
<path d="M1722.98 380.5Q1724.61 386.27 1730.37 387.89Q1724.61 389.52 1722.98 395.28Q1721.36 389.52 1715.59 387.89Q1721.36 386.27 1722.98 380.5ZM1729.18 391.23Q1730.33 395.32 1734.42 396.47Q1730.33 397.62 1729.18 401.71Q1728.02 397.62 1723.93 396.47Q1728.02 395.32 1729.18 391.23Z" fill="#cfcfcf" />
<path transform="translate(1598.2 936.3) rotate(45) scale(-.86 .86)" d="M1.500 -3V3.200a1.500 1.500 0 0 1-3 0V-3.800a2.900 2.900 0 0 1 5.800 0V3.300" fill="none" stroke="#c5c5c5" stroke-width="1.1" stroke-linecap="round"/>
<path transform="translate(1620.55 931.25) scale(0.395833 0.395833)" d="M14.25.18l.9.2.73.26.59.3.45.32.34.34.25.34.16.33.1.3.04.26.02.2-.01.13V8.5l-.05.63-.13.55-.21.46-.26.38-.3.31-.33.25-.35.19-.35.14-.33.1-.3.07-.26.04-.21.02H8.77l-.69.05-.59.14-.5.22-.41.27-.33.32-.27.35-.2.36-.15.37-.1.35-.07.32-.04.27-.02.21v3.06H3.17l-.21-.03-.28-.07-.32-.12-.35-.18-.36-.26-.36-.36-.35-.46-.32-.59-.28-.73-.21-.88-.14-1.05-.05-1.23.06-1.22.16-1.04.24-.87.32-.71.36-.57.4-.44.42-.33.42-.24.4-.16.36-.1.32-.05.24-.01h.16l.06.01h8.16v-.83H6.18l-.01-2.75-.02-.37.05-.34.11-.31.17-.28.25-.26.31-.23.38-.2.44-.18.51-.15.58-.12.64-.1.71-.06.77-.04.84-.02 1.27.05zm-6.3 1.98l-.23.33-.08.41.08.41.23.34.33.22.41.09.41-.09.33-.22.23-.34.08-.41-.08-.41-.23-.33-.33-.22-.41-.09-.41.09zm13.09 3.95l.28.06.32.12.35.18.36.27.36.35.35.47.32.59.28.73.21.88.14 1.04.05 1.23-.06 1.23-.16 1.04-.24.86-.32.71-.36.57-.4.45-.42.33-.42.24-.4.16-.36.09-.32.05-.24.02-.16-.01h-8.22v.82h5.84l.01 2.76.02.36-.05.34-.11.31-.17.29-.25.25-.31.24-.38.2-.44.17-.51.15-.58.13-.64.09-.71.07-.77.04-.84.01-1.27-.04-1.07-.14-.9-.2-.73-.25-.59-.3-.45-.33-.34-.34-.25-.34-.16-.33-.1-.3-.04-.25-.02-.2.01-.13v-5.34l.05-.64.13-.54.21-.46.26-.38.3-.32.33-.24.35-.2.35-.14.33-.1.3-.06.26-.04.21-.02.13-.01h5.84l.69-.05.59-.14.5-.21.41-.28.33-.32.27-.35.2-.36.15-.36.1-.35.07-.32.04-.28.02-.21V6.07h2.09l.14.01zm-6.47 14.25l-.23.33-.08.41.08.41.23.33.33.23.41.08.41-.08.33-.23.23-.33.08-.41-.08-.41-.23-.33-.33-.23-.41-.08-.41.08z" fill="#4a9fd0"/>
<path d="M1703.7 931.7l8.6 8.6M1712.3 931.7l-8.6 8.6" fill="none" stroke="#c5c5c5" stroke-width="1.2" stroke-linecap="round" stroke-linejoin="round" />
<path d="M1628.8 991.3L1632.4 994.9L1636 991.3" fill="none" stroke="#c5c5c5" stroke-width="1.1" stroke-linecap="round" stroke-linejoin="round" />
<path d="M1710.7 991.3L1714.3 994.9L1717.9 991.3" fill="none" stroke="#c5c5c5" stroke-width="1.1" stroke-linecap="round" stroke-linejoin="round" />
<path d="M1801.500 998.500H1800.500a3 3 0 0 1-.400-5.950a4.300 4.300 0 0 1 8.400-.500a3.200 3.200 0 0 1 2.600 2.200" fill="none" stroke="#808080" stroke-width="1.1" stroke-linecap="round" stroke-linejoin="round" />
<path d="M1803.500 995.200L1811.800 998.200L1803.500 1001.200L1805 998.200Z" fill="none" stroke="#808080" stroke-width="1.1" stroke-linecap="round" stroke-linejoin="round" />
<path transform="translate(1822.45 984.95) scale(0.96875 0.96875)" d="M1.01 1.92 1.76 1.49 14.99 7.47V8.37L1.76 14.35L1.01 13.92L2.56 8ZM3.63 8.48 2.35 13.12 13.49 7.89 2.35 2.83 3.63 7.41 9.01 7.52V8.48Z" fill="#969696"/>
<path transform="translate(6.7 1030.6) scale(0.9375 0.9375)" d="M12.91 9.55 8.91 5.6 12.91 1.6 12.27 1.01 8 5.28V5.92L12.27 10.19ZM2.99 5.6 7.09 9.71 2.99 13.76 3.63 14.4 8 9.97V9.39L3.63 5.01Z" fill="#c5c5c5"/>
<path transform="translate(38.6 1030.5) scale(0.9375 0.9375)" d="M8.59 1.01Q9.76 1.07 10.85 1.6Q11.95 2.13 12.8 2.99Q14.83 5.17 14.83 8.11Q14.83 10.4 13.23 12.48Q12.43 13.44 11.41 14.05Q10.4 14.67 9.23 14.88Q6.67 15.36 4.59 14.19Q3.52 13.6 2.72 12.69Q1.92 11.79 1.49 10.67Q1.07 9.55 0.99 8.32Q0.91 7.09 1.28 5.97Q2.08 3.52 4.11 2.19Q5.07 1.55 6.21 1.23Q7.36 0.91 8.59 1.01ZM9.12 13.92Q11.15 13.44 12.48 11.79Q13.81 9.97 13.71 8Q13.71 6.77 13.25 5.65Q12.8 4.53 12 3.68Q10.45 2.13 8.43 1.97Q7.41 1.92 6.4 2.16Q5.39 2.4 4.59 2.99Q2.88 4.27 2.27 6.35Q1.65 8.43 2.53 10.35Q3.41 12.27 5.23 13.28Q6.08 13.81 7.09 13.97Q8.11 14.13 9.12 13.92ZM7.89 7.52 10.29 5.01 10.99 5.71 8.59 8.21 10.99 10.72 10.29 11.41 7.89 8.91 5.49 11.41 4.8 10.72 7.2 8.21 4.8 5.71 5.49 5.01Z" fill="#c5c5c5"/>
<path transform="translate(66.8 1030.1) scale(0.9375 0.9375)" d="M7.57 1.01H8.43L14.99 13.28L14.56 13.97H1.44L1.01 13.28ZM8 2.29 2.29 13.01H13.71ZM8.64 12V10.99H7.36V12ZM7.36 9.97V5.97H8.64V9.97Z" fill="#c5c5c5"/>
<path transform="translate(107.75 1031.55) scale(0.90625 0.90625)" d="M7.31 9.01 6.4 9.87Q6.19 9.07 5.52 8.53Q4.85 8 4 8Q3.15 8 2.48 8.53Q1.81 9.07 1.6 9.87L0.69 9.01L0 9.71L1.17 10.83L1.01 10.99V12H0V13.01H1.01V13.07Q1.07 13.55 1.28 14.03L0 15.31L0.69 16L1.81 14.88Q2.19 15.41 2.77 15.71Q3.36 16 4 16Q4.64 16 5.23 15.71Q5.81 15.41 6.19 14.88L7.31 16L8 15.31L6.72 13.97Q6.93 13.55 6.99 13.01V12.96H8V12H6.99V10.99L6.88 10.83L8 9.71ZM4 9.01Q4.64 9.01 5.07 9.44Q5.49 9.87 5.49 10.51H2.51Q2.51 9.87 2.93 9.44Q3.36 9.01 4 9.01ZM6.03 13.01Q5.92 13.81 5.36 14.37Q4.8 14.93 4 14.99Q3.2 14.93 2.64 14.37Q2.08 13.81 2.03 13.01V11.52H6.03ZM15.84 6.4V7.25L9.01 11.57V10.4L14.67 6.83L6.03 1.33V7.63Q5.55 7.31 5.01 7.15V0.43L5.76 0Z" fill="#c5c5c5"/>
<path transform="translate(1641.1 1030.2) scale(1.0125 1.0125)" d="M6.03 2.99V1.97H5.92Q5.44 1.97 4.99 2.16Q4.53 2.35 4.21 2.69Q3.89 3.04 3.73 3.47Q3.57 3.89 3.52 4.32Q3.47 4.75 3.52 5.17V6.03Q3.52 6.35 3.41 6.61Q3.2 7.15 2.67 7.41Q2.4 7.52 2.08 7.52H2.03V8.48H2.08Q2.4 8.48 2.67 8.59V8.64Q2.93 8.75 3.09 8.91V8.96Q3.31 9.12 3.41 9.39Q3.52 9.65 3.52 9.97V10.83Q3.47 11.25 3.52 11.68V11.73Q3.57 12.11 3.73 12.53Q3.89 12.96 4.24 13.31Q4.59 13.65 5.01 13.81Q5.44 13.97 5.92 14.03H6.03V13.01H5.92Q5.6 13.01 5.33 12.91Q5.07 12.8 4.88 12.59Q4.69 12.37 4.59 12.11Q4.48 11.84 4.48 11.52V10.19Q4.48 9.87 4.43 9.55Q4.37 9.23 4.27 8.96Q4 8.37 3.52 8Q4 7.63 4.27 7.04Q4.37 6.77 4.43 6.45Q4.48 6.13 4.48 5.81V4.48Q4.48 4 4.72 3.65Q4.96 3.31 5.33 3.09Q5.6 2.99 5.92 2.99ZM10.03 13.01V13.97H10.08Q10.56 13.97 10.99 13.81Q11.41 13.65 11.76 13.31Q12.11 12.96 12.27 12.53Q12.43 12.16 12.48 11.68Q12.53 11.25 12.48 10.83V9.97Q12.48 9.65 12.59 9.39Q12.8 8.85 13.33 8.59Q13.6 8.48 13.92 8.48H14.03V7.52H13.92Q13.6 7.52 13.33 7.41V7.36Q13.07 7.25 12.91 7.09V7.04Q12.69 6.88 12.59 6.61Q12.48 6.35 12.48 6.03V5.17Q12.53 4.75 12.48 4.32V4.27Q12.43 3.89 12.27 3.47Q12.11 3.04 11.76 2.69Q11.41 2.35 10.99 2.16Q10.56 1.97 10.08 2.03H10.03V2.99H10.08Q10.4 2.99 10.67 3.09Q10.93 3.2 11.12 3.41Q11.31 3.63 11.41 3.89Q11.52 4.16 11.52 4.48V5.81Q11.52 6.13 11.57 6.45Q11.63 6.77 11.73 7.04Q12 7.63 12.48 8Q12 8.37 11.73 8.96Q11.63 9.23 11.57 9.55Q11.52 9.87 11.52 10.19V11.52Q11.52 12 11.28 12.35Q11.04 12.69 10.67 12.91Q10.4 13.01 10.08 13.01Z" fill="#d4d4d4"/>
<path transform="translate(1717.35 1029.75) scale(1.03125 1.03125)" d="M6.24 9.97Q6.56 9.97 6.77 10.21Q6.99 10.45 6.99 10.77V12.27Q6.99 12.59 6.77 12.8Q6.56 13.01 6.24 13.01Q5.92 13.01 5.71 12.8Q5.49 12.59 5.49 12.27V10.77Q5.49 10.45 5.71 10.21Q5.92 9.97 6.24 9.97ZM10.51 10.77Q10.51 10.45 10.29 10.21Q10.08 9.97 9.76 9.97Q9.44 9.97 9.23 10.21Q9.01 10.45 9.01 10.77V12.27Q9.01 12.59 9.23 12.8Q9.44 13.01 9.76 13.01Q10.08 13.01 10.29 12.8Q10.51 12.59 10.51 12.27ZM7.84 2.77Q7.95 2.83 8 2.93L8.16 2.77Q9.07 1.76 11.09 2.03Q12.96 2.24 13.81 3.25Q14.51 4.16 14.51 5.76Q14.51 6.77 14.24 7.41L14.4 8.27H14.45Q15.2 8.64 15.6 9.31Q16 9.97 16 10.72V12Q16 12.27 15.84 12.59Q15.73 12.75 15.55 12.99Q15.36 13.23 14.99 13.49L14.4 13.92Q14.08 14.19 13.71 14.4Q13.07 14.77 12.37 15.04Q10.19 16 8 16Q5.81 16 3.63 15.04Q2.93 14.77 2.29 14.4Q1.92 14.19 1.6 13.92L1.01 13.49Q0.64 13.23 0.45 12.99Q0.27 12.75 0.16 12.59Q0 12.27 0 12V10.72Q0 9.97 0.4 9.31Q0.8 8.64 1.55 8.27H1.6L1.76 7.41Q1.49 6.77 1.49 5.76Q1.49 4.16 2.19 3.25Q3.04 2.24 4.91 2.03Q6.93 1.76 7.84 2.77ZM3.04 8.69 2.99 8.8V13.07L3.04 13.12Q3.57 13.44 4.21 13.71Q6.13 14.51 8 14.51Q9.87 14.51 11.79 13.71Q12.43 13.44 12.96 13.12L13.01 13.07V8.8L12.96 8.69Q12.32 9.01 11.25 9.01Q9.49 9.01 8.53 8Q8.21 7.68 8 7.25Q7.79 7.68 7.47 8Q6.51 9.01 4.75 9.01Q3.68 9.01 3.04 8.69ZM6.77 3.79Q6.35 3.36 5.07 3.49Q3.79 3.63 3.39 4.13Q2.99 4.64 2.99 5.71Q2.99 6.77 3.31 7.15Q3.63 7.52 4.75 7.52Q5.87 7.52 6.37 6.99Q6.88 6.45 6.99 5.39Q7.15 4.21 6.77 3.79ZM9.23 3.79Q8.85 4.21 9.01 5.39Q9.12 6.45 9.63 6.99Q10.13 7.52 11.25 7.52Q12.37 7.52 12.69 7.15Q13.01 6.77 13.01 5.71Q13.01 4.64 12.61 4.13Q12.21 3.63 10.93 3.49Q9.65 3.36 9.23 3.79Z" fill="#c5c5c5"/>
<path transform="translate(1841 1030.8) scale(0.9375 0.9375)" d="M13.39 10.56Q13.01 9.44 13.01 8.21V6.19Q13.01 5.23 12.69 4.35Q12.37 3.47 11.73 2.75Q11.09 2.03 10.27 1.57Q9.44 1.12 8.48 1.01Q7.41 0.91 6.4 1.25Q5.39 1.6 4.61 2.32Q3.84 3.04 3.41 4Q2.99 4.96 2.99 6.03V8.21Q2.99 9.44 2.61 10.56L2.03 12.32L2.45 13.01H5.97Q5.97 13.81 6.56 14.4Q7.15 14.99 7.97 14.99Q8.8 14.99 9.39 14.4Q9.97 13.81 9.97 13.01H13.49L13.97 12.32ZM8.69 13.71Q8.37 14.03 7.97 14.03Q7.57 14.03 7.28 13.73Q6.99 13.44 6.99 13.01H8.96Q9.01 13.44 8.69 13.71ZM3.15 12 3.52 10.88Q4 9.6 4 8.21V6.03Q4 5.17 4.35 4.37Q4.69 3.57 5.31 3.01Q5.92 2.45 6.75 2.19Q7.57 1.92 8.37 2.03Q9.97 2.24 10.99 3.41Q11.47 4 11.73 4.72Q12 5.44 12 6.19V8.21Q12 9.6 12.43 10.93L12.8 12Z" fill="#c5c5c5"/>
</svg>
</body></html>
